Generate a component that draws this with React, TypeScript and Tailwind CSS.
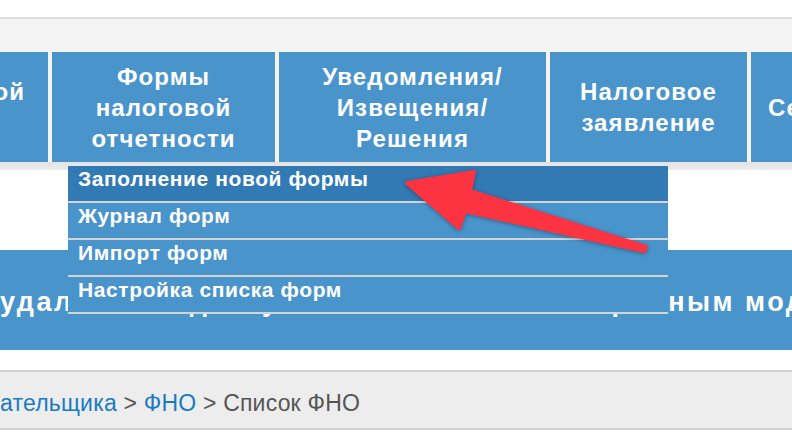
import React from "react";

const navItems = [
  { lines: ["Формы", "налоговой", "отчетности"], width: "w-[223px]" },
  { lines: ["Уведомления/", "Извещения/", "Решения"], width: "w-[267px]" },
  { lines: ["Налоговое", "заявление"], width: "w-[197px]" },
];

const menuItems = [
  "Заполнение новой формы",
  "Журнал форм",
  "Импорт форм",
  "Настройка списка форм",
];

const App = () => {
  return (
    <div className="relative w-full h-[433px] overflow-hidden bg-white font-['Liberation_Sans',Arial,sans-serif]">
      {/* Header with nav */}
      <div className="mt-[17px] border-t-2 border-[#dcdcdc] bg-[#f4f4f4] pt-[33px]">
        <div className="flex gap-[4px] h-[110px]">
          <div className="w-[48px] shrink-0 flex justify-end items-center overflow-hidden bg-[#4a94cc]">
            <div className="shrink-0 pr-[23px] text-center whitespace-nowrap text-white font-bold text-[24px] leading-[31px] tracking-[1.1px]">
              <div>Сведения налоговой</div>
              <div>службы</div>
            </div>
          </div>
          {navItems.map((item) => (
            <div
              key={item.lines[0]}
              className={`${item.width} shrink-0 flex flex-col items-center justify-center bg-[#4a94cc] text-white font-bold text-[24px] leading-[31px] tracking-[1.1px] text-center`}
            >
              {item.lines.map((l) => (
                <div key={l} className="whitespace-nowrap">
                  {l}
                </div>
              ))}
            </div>
          ))}
          <div className="w-[160px] shrink-0 flex items-center pl-[17px] bg-[#4a94cc] text-white font-bold text-[24px] leading-[31px] tracking-[1.1px] whitespace-nowrap">
            Сервисы
          </div>
        </div>
        <div className="h-[8px] bg-gradient-to-b from-[#e2e2e2] to-[#ececec]" />
      </div>

      {/* Empty white area */}
      <div className="h-[80px]" />

      {/* Blue band */}
      <div className="h-[100px] flex items-center pt-[4px] bg-[#4a94cc] overflow-hidden">
        <span className="whitespace-nowrap text-white font-bold text-[27px] leading-[30px] tracking-[2.5px]">
          удаленного доступа абонентов к электронным модулям
        </span>
      </div>

      <div className="h-[20px]" />

      {/* Breadcrumb */}
      <div className="h-[60px] border-y-2 border-[#d2d2d2] bg-[#ededed] pt-[17px] text-[23px] leading-[28px] tracking-[0.2px] whitespace-nowrap text-[#555555]">
        <a className="text-[#1a7bc0]">ательщика</a>
        <span> &gt; </span>
        <a className="text-[#1a7bc0]">ФНО</a>
        <span> &gt; Список ФНО</span>
      </div>

      {/* Dropdown menu */}
      <div className="absolute top-[166px] left-[68px] w-[600px]">
        {menuItems.map((m, i) => (
          <div
            key={m}
            className={`h-[37px] border-b-2 border-[#d4d4d4] pl-[10px] pt-[1px] text-white font-bold text-[21px] leading-[24px] tracking-[0.6px] whitespace-nowrap ${
              i === 0 ? "bg-[#327ab4]" : "bg-[#4a94cc]"
            }`}
          >
            {m}
          </div>
        ))}
      </div>

      {/* Annotation arrow */}
      <svg
        className="absolute inset-0 pointer-events-none drop-shadow-[0_1px_2px_rgba(0,0,0,0.35)]"
        width="792"
        height="433"
        viewBox="0 0 792 433"
      >
        <polygon
          points="407,183 474,172 470,191 646,247 644,251 465,211 459,228"
          fill="#fc3442"
          stroke="#fc3442"
          strokeWidth="4"
          strokeLinejoin="round"
        />
      </svg>
    </div>
  );
};

export default App;
